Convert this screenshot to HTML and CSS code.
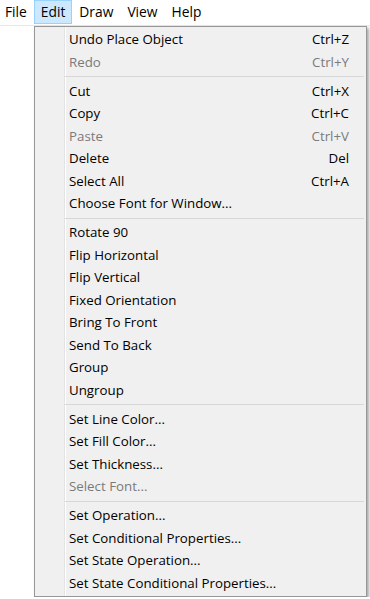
FILE: index.html
```html
<!DOCTYPE html>
<html lang="en">
<head>
  <meta charset="UTF-8">
  <title>Edit menu</title>
  <link rel="stylesheet" href="styles.css">
</head>
<body>
  <div class="menubar">
    <span class="menubar-item">File</span>
    <span class="menubar-item active">Edit</span>
    <span class="menubar-item">Draw</span>
    <span class="menubar-item">View</span>
    <span class="menubar-item">Help</span>
  </div>

  <div class="menu">
    <div class="menu-item"><span>Undo Place Object</span><span class="shortcut">Ctrl+Z</span></div>
    <div class="menu-item disabled"><span>Redo</span><span class="shortcut">Ctrl+Y</span></div>
    <div class="menu-sep"></div>
    <div class="menu-item"><span>Cut</span><span class="shortcut">Ctrl+X</span></div>
    <div class="menu-item"><span>Copy</span><span class="shortcut">Ctrl+C</span></div>
    <div class="menu-item disabled"><span>Paste</span><span class="shortcut">Ctrl+V</span></div>
    <div class="menu-item"><span>Delete</span><span class="shortcut">Del</span></div>
    <div class="menu-item"><span>Select All</span><span class="shortcut">Ctrl+A</span></div>
    <div class="menu-item"><span>Choose Font for Window...</span></div>
    <div class="menu-sep"></div>
    <div class="menu-item"><span>Rotate 90</span></div>
    <div class="menu-item"><span>Flip Horizontal</span></div>
    <div class="menu-item"><span>Flip Vertical</span></div>
    <div class="menu-item"><span>Fixed Orientation</span></div>
    <div class="menu-item"><span>Bring To Front</span></div>
    <div class="menu-item"><span>Send To Back</span></div>
    <div class="menu-item"><span>Group</span></div>
    <div class="menu-item"><span>Ungroup</span></div>
    <div class="menu-sep"></div>
    <div class="menu-item"><span>Set Line Color...</span></div>
    <div class="menu-item"><span>Set Fill Color...</span></div>
    <div class="menu-item"><span>Set Thickness...</span></div>
    <div class="menu-item disabled"><span>Select Font...</span></div>
    <div class="menu-sep"></div>
    <div class="menu-item"><span>Set Operation...</span></div>
    <div class="menu-item"><span>Set Conditional Properties...</span></div>
    <div class="menu-item"><span>Set State Operation...</span></div>
    <div class="menu-item"><span>Set State Conditional Properties...</span></div>
  </div>
</body>
</html>
```

FILE: styles.css
```css
html, body {
  margin: 0;
  padding: 0;
}
body {
  font-family: 'Open Sans', 'Noto Sans', Arial, sans-serif;
  font-size: 13.3px;
  color: #000;
  background: #fff;
}

/* Menu bar */
.menubar {
  display: flex;
  height: 25px;
  border-bottom: 1px solid #e8e8e8;
  background: #fff;
  font-size: 13.8px;
}
.menubar-item {
  height: 22px;
  line-height: 22px;
  padding: 0 6px;
  border: 1px solid transparent;
}
.menubar-item:first-child {
  padding-left: 4px;
}
.menubar-item.active {
  background: #cce8ff;
  border-color: #99d1ff;
}

/* Drop-down */
.menu {
  box-sizing: border-box;
  width: 333px;
  margin-left: 34px;
  padding: 1px 2px 2px 2px;
  border: 1px solid #979797;
  background:
    linear-gradient(to right, transparent 29px, #e3e3e3 29px, #e3e3e3 30px, #fff 30px, #fff 31px, transparent 31px),
    #f0f0f0;
  box-shadow: 2px 2px 3px rgba(0,0,0,0.35);
}
.menu-item {
  display: flex;
  justify-content: space-between;
  align-items: center;
  height: 22.5px;
  line-height: 22.5px;
  padding: 0 15px 0 32px;
  white-space: nowrap;
}
.menu-item.disabled {
  color: #7a7a7a;
}
.menu-sep {
  height: 0;
  margin: 3px 0 2.5px 28px;
  border-top: 1px solid #d7d7d7;
}
```
